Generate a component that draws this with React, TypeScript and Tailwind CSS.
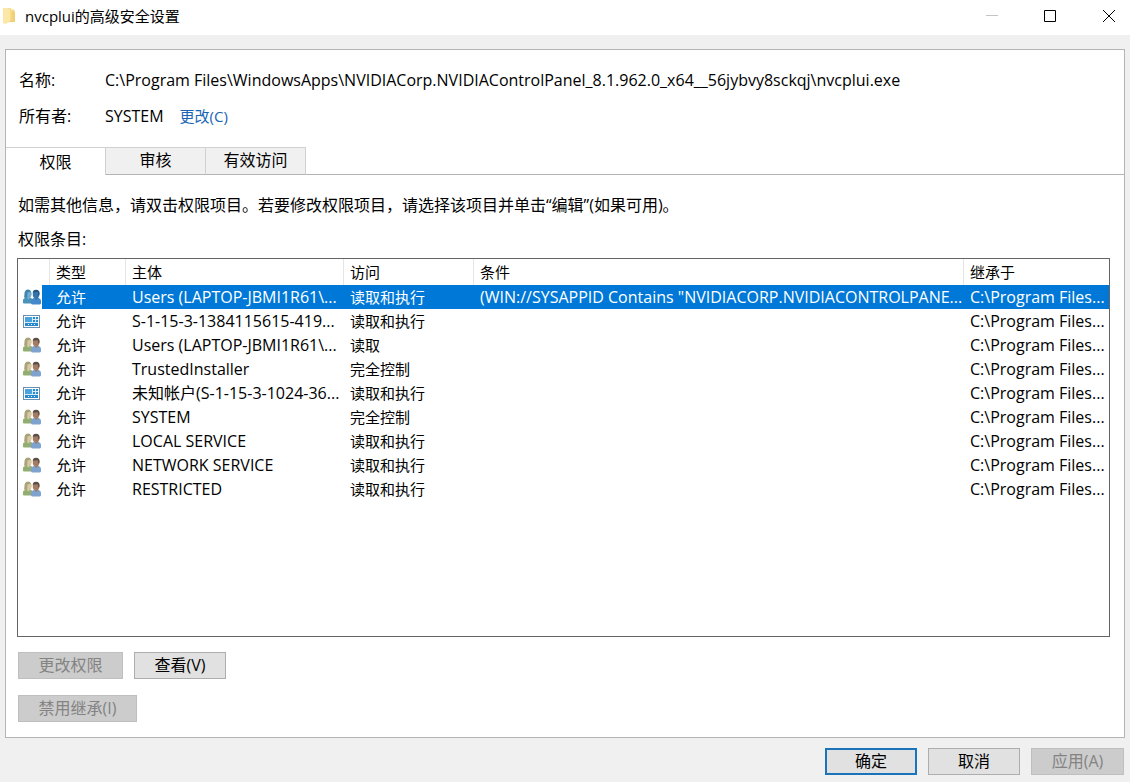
import React, { useState } from 'react'

type Entry = {
  icon: 'group' | 'app'
  type: string
  principal: string
  access: string
  condition?: string
  inherited: string
}

const entries: Entry[] = [
  {
    icon: 'group',
    type: '允许',
    principal: 'Users (LAPTOP-JBMI1R61\\...',
    access: '读取和执行',
    condition: '(WIN://SYSAPPID Contains "NVIDIACORP.NVIDIACONTROLPANE...',
    inherited: 'C:\\Program Files...',
  },
  { icon: 'app', type: '允许', principal: 'S-1-15-3-1384115615-419...', access: '读取和执行', inherited: 'C:\\Program Files...' },
  { icon: 'group', type: '允许', principal: 'Users (LAPTOP-JBMI1R61\\...', access: '读取', inherited: 'C:\\Program Files...' },
  { icon: 'group', type: '允许', principal: 'TrustedInstaller', access: '完全控制', inherited: 'C:\\Program Files...' },
  { icon: 'app', type: '允许', principal: '未知帐户(S-1-15-3-1024-36...', access: '读取和执行', inherited: 'C:\\Program Files...' },
  { icon: 'group', type: '允许', principal: 'SYSTEM', access: '完全控制', inherited: 'C:\\Program Files...' },
  { icon: 'group', type: '允许', principal: 'LOCAL SERVICE', access: '读取和执行', inherited: 'C:\\Program Files...' },
  { icon: 'group', type: '允许', principal: 'NETWORK SERVICE', access: '读取和执行', inherited: 'C:\\Program Files...' },
  { icon: 'group', type: '允许', principal: 'RESTRICTED', access: '读取和执行', inherited: 'C:\\Program Files...' },
]

const tabs = ['权限', '审核', '有效访问']

function FolderIcon() {
  return (
    <svg width="13" height="16" viewBox="0 0 13 16" aria-hidden="true">
      <path d="M0 0h8v1.500h3.500V14H0z" fill="#f6dc8c" />
      <path d="M0 0h5l2 1.500V14l-5 2-2-1z" fill="#fbe7a6" />
      <path d="M8.500 3.500H12V14H5l3.500-1.500z" fill="#f0d074" />
    </svg>
  )
}

function GroupIcon({ selected }: { selected: boolean }) {
  const c = selected
    ? { hair: '#3f86ad', face: '#74add0', body: '#4a93b8', hair2: '#1d5486', face2: '#3474ae', body2: '#4489cb' }
    : { hair: '#a9a577', face: '#dcc9a4', body: '#93ad70', hair2: '#5d4b40', face2: '#a37c61', body2: '#7fa3d0' }
  return (
    <svg width="18" height="16" viewBox="0 0 18 16" aria-hidden="true">
      <path d="M0 14v-2.500C0 10 1 9.300 2.500 9L4 8.500h3l1.500.7L10 11v3.500H1z" fill={c.body} />
      <path d="M1 8.500c.5-1.500.3-3.500.6-5C2 1.500 3.300.5 5 .5s3 1 3.300 3c.2 1.500 0 3-.3 4L5 9.500z" fill={c.hair} />
      <path d="M4.500 3.500c1.300 0 2-.2 2.700-1l1.200 2c0 2-.9 3.500-2 3.800v1.200l-1 1-1.200-1z" fill={c.face} />
      <path d="M8 14.500V12c0-1.500.8-2.200 2.300-2.700L12 8.500h3l1 .8c1.400.5 2 1.400 2 3v2.200l-1 1H9z" fill={c.body2} />
      <path d="M9.800 3.500h6.400V6c0 1.600-.7 2.700-1.500 3.200v.6l-1.300 1.400-1.400-1.500v-.5C10.500 8.600 9.800 7.500 9.800 6z" fill={c.face2} />
      <path d="M9.800 4C9.700 2 11 .8 13 .8c2.300 0 3.800 1.400 3.600 4-.1 1.300-.5 2-.9 2.500-.5-1.300-.3-2.500-1-3.800-1.500.3-3.300.1-4.900.5z" fill={c.hair2} />
    </svg>
  )
}

function AppIcon() {
  return (
    <svg width="18" height="15" viewBox="0 -1 18 15" aria-hidden="true">
      <rect x=".5" y=".5" width="16" height="12" fill="#fff" stroke="#6b8fae" />
      <path d="M2 2h13v9H2z" fill="#2589d0" />
      <path d="M2 2h7v5H2z" fill="#4ba3dd" />
      <path d="M9 2h1v5H9zM12 2h1v5h-1zM10 4h5v1h-5zM2 7h13v1H2z" fill="#d8ecf8" />
      <path d="M5 9h1v1H5zM8 9h1v1H8zM11 9h1v1h-1z" fill="#fff" />
    </svg>
  )
}

export default function App() {
  const [selected, setSelected] = useState(0)
  const [tab, setTab] = useState(0)

  const th = 'border-r border-[#e5e5e5] pl-1.5 text-left font-normal leading-[26px]'
  const td = 'overflow-hidden whitespace-nowrap pl-1.5'
  const button = 'h-[27px] border border-[#adadad] bg-[#e1e1e1] pb-0.5 text-center'
  const disabled = 'h-[27px] border border-[#bfbfbf] bg-[#cccccc] pb-0.5 text-center text-[#838383]'

  return (
    <div className="flex min-h-screen flex-col bg-[#f0f0f0] font-['Open_Sans','Noto_Sans_CJK_SC',sans-serif] text-base leading-6 text-black">
      <header className="flex h-[35px] justify-between bg-white pb-[3px] pl-[3px] text-[15px]">
        <div className="flex items-center gap-[9px]">
          <FolderIcon />
          <h1>nvcplui的高级安全设置</h1>
        </div>
        <div className="flex h-full">
          <button aria-label="最小化" disabled className="flex w-[58px] items-center justify-center">
            <svg width="12" height="12" viewBox="0 0 12 12" stroke="#c4c4c4">
              <path d="M0 5.500h12" />
            </svg>
          </button>
          <button aria-label="最大化" className="flex w-[58px] items-center justify-center">
            <svg width="12" height="12" viewBox="0 0 12 12" fill="none" stroke="#000">
              <path d="M.5.5h11v11H.5z" />
            </svg>
          </button>
          <button aria-label="关闭" className="flex w-[51px] items-center justify-end pr-[15px]">
            <svg width="12" height="12" viewBox="0 0 12 12" stroke="#000">
              <path d="M0 0l12 12M12 0L0 12" />
            </svg>
          </button>
        </div>
      </header>

      <main className="mx-[5px] mt-[14px] flex flex-1 flex-col border border-[#b4b4b4] bg-white">
        <dl className="grid grid-cols-[86px_1fr] gap-y-3 pt-[18px] pl-[13px]">
          <dt>名称:</dt>
          <dd>C:\Program Files\WindowsApps\NVIDIACorp.NVIDIAControlPanel_8.1.962.0_x64__56jybvy8sckqj\nvcplui.exe</dd>
          <dt>所有者:</dt>
          <dd className="flex gap-4">
            <span>SYSTEM</span>
            <a href="#change" className="text-[15px] text-[#1a66b5]">更改(C)</a>
          </dd>
        </dl>

        <div role="tablist" className="mt-[19px] flex h-7">
          {tabs.map((name, i) => (
            <button
              key={name}
              role="tab"
              aria-selected={tab === i}
              onClick={() => setTab(i)}
              className={
                tab === i
                  ? 'w-[100px] border-t border-r border-[#d0d0d0] bg-white'
                  : 'w-[100px] border-t border-r border-b border-[#d0d0d0] border-b-[#b4b4b4] bg-[#f0f0f0] pb-0.5'
              }
            >
              {name}
            </button>
          ))}
          <div className="flex-1 border-b border-[#b4b4b4]" />
        </div>

        <section className="flex flex-1 flex-col pt-[18px] pr-[14px] pb-[15px] pl-[11px]">
          <p className="pl-px">如需其他信息，请双击权限项目。若要修改权限项目，请选择该项目并单击“编辑”(如果可用)。</p>
          <h2 className="mt-2.5 pl-px">权限条目:</h2>

          <div className="mt-[7px] min-h-[200px] flex-1 border border-[#646464]">
            <table className="w-full table-fixed border-separate border-spacing-0 text-[15px]">
              <colgroup>
                <col className="w-8" />
                <col className="w-[76px]" />
                <col className="w-[218px]" />
                <col className="w-[130px]" />
                <col />
                <col className="w-[145px]" />
              </colgroup>
              <thead>
                <tr>
                  <th className={th} aria-label="图标"></th>
                  <th className={th}>类型</th>
                  <th className={th}>主体</th>
                  <th className={th}>访问</th>
                  <th className={th}>条件</th>
                  <th className="pl-1.5 text-left font-normal">继承于</th>
                </tr>
              </thead>
              <tbody>
                {entries.map((e, i) => (
                  <tr
                    key={i}
                    onClick={() => setSelected(i)}
                    className={selected === i ? 'h-6 bg-[#0078d7] text-white' : 'h-6'}
                  >
                    <td>
                      <div className="flex h-6 w-6 items-center bg-white pl-[5px]">
                        {e.icon === 'group' ? <GroupIcon selected={selected === i} /> : <AppIcon />}
                      </div>
                    </td>
                    <td className={td}>{e.type}</td>
                    <td className={td + ' text-base'}>{e.principal}</td>
                    <td className={td}>{e.access}</td>
                    <td className={td + ' text-base'}>{e.condition}</td>
                    <td className={td + ' text-base'}>{e.inherited}</td>
                  </tr>
                ))}
              </tbody>
            </table>
          </div>

          <div className="mt-[15px] flex gap-[11px] pl-px">
            <button disabled className={disabled + ' w-[105px]'}>更改权限</button>
            <button className={button + ' w-[92px]'}>查看(V)</button>
          </div>
          <div className="mt-4 pl-px">
            <button disabled className={disabled + ' w-[119px]'}>禁用继承(I)</button>
          </div>
        </section>
      </main>

      <footer className="flex justify-end gap-[11px] pt-2.5 pr-1.5 pb-[7px]">
        <button className="h-[27px] w-[92px] border-2 border-[#1a74bc] bg-[#e1e1e1] pb-0.5 leading-none">确定</button>
        <button className={button + ' w-[92px]'}>取消</button>
        <button disabled className={disabled + ' w-[93px]'}>应用(A)</button>
      </footer>
    </div>
  )
}
